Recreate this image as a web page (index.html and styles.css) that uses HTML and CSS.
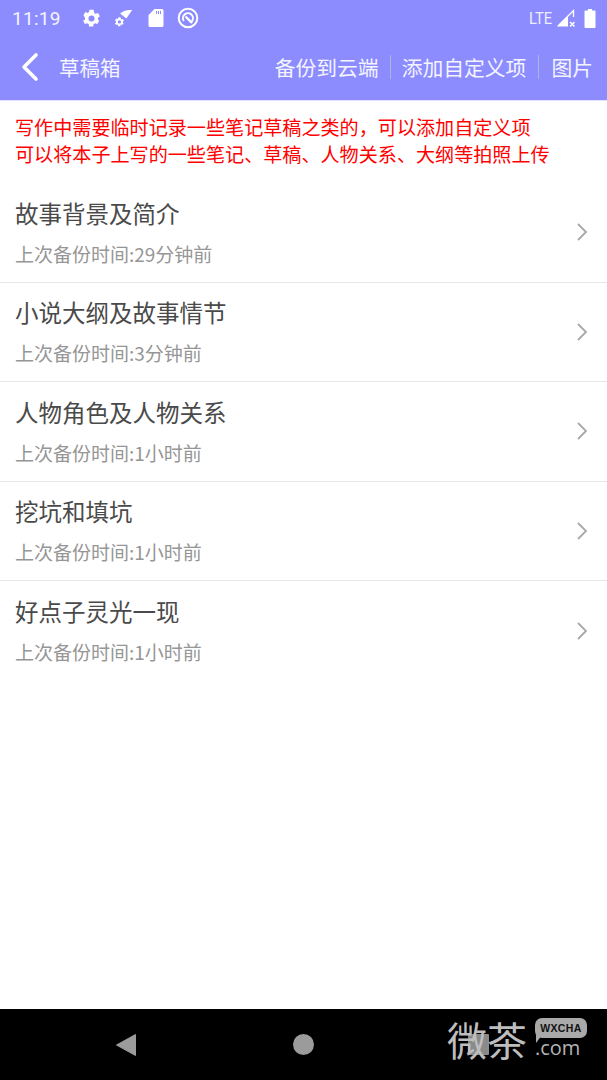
FILE: index.html
```html
<!DOCTYPE html>
<html lang="zh">
<head>
<meta charset="utf-8">
<title>草稿箱</title>
<link rel="stylesheet" href="styles.css">
</head>
<body>
<div class="screen">
  <header class="header">
    <div class="status">
      <span class="time">11:19</span>
      <svg class="ic gear" viewBox="0 0 24 24"><path fill="#fff" fill-rule="evenodd" d="M19.4 13a7.5 7.5 0 0 0 0-2l2.2-1.7-2.1-3.6-2.6 1a7.5 7.5 0 0 0-1.7-1L14.4 2h-4.8l-.4 2.7a7.5 7.5 0 0 0-1.7 1l-2.6-1-2.1 3.6L4.6 11a7.5 7.5 0 0 0 0 2l-2.2 1.7 2.1 3.600 2.6-1a7.5 7.5 0 0 0 1.7 1l.4 2.7h4.8l.4-2.7a7.5 7.5 0 0 0 1.7-1l2.6 1 2.1-3.6zM12 15.5a3.5 3.5 0 1 1 0-7 3.5 3.5 0 0 1 0 7z"/></svg>
      <svg class="ic wifigear" viewBox="0 0 24 24"><path fill="#fff" d="M8.500 6.500Q15 1.500 23 2.500L16 12.500Z"/><g transform="translate(1 10) scale(.56)"><path fill="#fff" fill-rule="evenodd" d="M19.400 13a7.500 7.500 0 0 0 0-2l2.200-1.700-2.100-3.600-2.600 1a7.500 7.500 0 0 0-1.700-1L14.400 2h-4.800l-.4 2.700a7.500 7.500 0 0 0-1.700 1l-2.600-1-2.100 3.600L4.600 11a7.500 7.500 0 0 0 0 2l-2.200 1.700 2.100 3.600 2.600-1a7.500 7.500 0 0 0 1.700 1l.4 2.700h4.800l.4-2.700a7.500 7.500 0 0 0 1.700-1l2.600 1 2.100-3.600zM12 15.500a3.500 3.500 0 1 1 0-7 3.500 3.500 0 0 1 0 7z"/></g></svg>
      <svg class="ic sd" viewBox="0 0 16 20"><path fill="#fff" fill-rule="evenodd" d="M6.500 1H14a1.500 1.500 0 0 1 1.500 1.500v15A1.500 1.500 0 0 1 14 19H2a1.500 1.500 0 0 1-1.500-1.500V7zM8 3v3h1V3zm2 0v3h1V3zm2 0v3h1V3z"/></svg>
      <svg class="ic data" viewBox="0 0 24 24"><circle cx="12" cy="12" r="9.300" fill="none" stroke="#fff" stroke-width="2"/><path d="M7.800 15A5 5 0 1 1 15 16.200" fill="none" stroke="#fff" stroke-width="2"/><path d="M9.500 10.500l6.500 6.500" stroke="#fff" stroke-width="2.400"/></svg>
      <span class="spacer"></span>
      <span class="lte">LTE</span>
      <svg class="ic signal" viewBox="0 0 20 20"><path fill="none" stroke="#fff" stroke-width="1.300" d="M2 18 17.500 2.500V9"/><path fill="#fff" d="M1 18.500 12 7.500v11z"/><path stroke="#fff" stroke-width="1.500" d="m14 14 4.500 4.500m0-4.500-4.500 4.500"/></svg>
      <svg class="ic battery" viewBox="0 0 12 19"><path fill="#fff" d="M4 0h4v1.500h2.500a1 1 0 0 1 1 1V18a1 1 0 0 1-1 1h-9a1 1 0 0 1-1-1V2.500a1 1 0 0 1 1-1H4z"/></svg>
    </div>
    <nav class="toolbar">
      <svg class="back" viewBox="0 0 20 30"><path d="M16 3 4 15l12 12" fill="none" stroke="#fff" stroke-width="3.600" stroke-linecap="round" stroke-linejoin="round"/></svg>
      <h1 class="title">草稿箱</h1>
      <span class="spacer"></span>
      <a class="action">备份到云端</a>
      <i class="sep"></i>
      <a class="action">添加自定义项</a>
      <i class="sep sep-wide"></i>
      <a class="action">图片</a>
    </nav>
  </header>

  <main class="content">
    <p class="notice">写作中需要临时记录一些笔记草稿之类的，可以添加自定义项<br>可以将本子上写的一些笔记、草稿、人物关系、大纲等拍照上传</p>
    <ul class="list">
      <li class="row">
        <div class="row-text"><div class="row-title">故事背景及简介</div><div class="row-sub">上次备份时间:29分钟前</div></div>
        <svg class="chev" viewBox="0 0 12 20"><path d="M2 2l8 8-8 8" fill="none" stroke="#a8a8a8" stroke-width="1.800"/></svg>
      </li>
      <li class="row">
        <div class="row-text"><div class="row-title">小说大纲及故事情节</div><div class="row-sub">上次备份时间:3分钟前</div></div>
        <svg class="chev" viewBox="0 0 12 20"><path d="M2 2l8 8-8 8" fill="none" stroke="#a8a8a8" stroke-width="1.800"/></svg>
      </li>
      <li class="row">
        <div class="row-text"><div class="row-title">人物角色及人物关系</div><div class="row-sub">上次备份时间:1小时前</div></div>
        <svg class="chev" viewBox="0 0 12 20"><path d="M2 2l8 8-8 8" fill="none" stroke="#a8a8a8" stroke-width="1.800"/></svg>
      </li>
      <li class="row">
        <div class="row-text"><div class="row-title">挖坑和填坑</div><div class="row-sub">上次备份时间:1小时前</div></div>
        <svg class="chev" viewBox="0 0 12 20"><path d="M2 2l8 8-8 8" fill="none" stroke="#a8a8a8" stroke-width="1.800"/></svg>
      </li>
      <li class="row">
        <div class="row-text"><div class="row-title">好点子灵光一现</div><div class="row-sub">上次备份时间:1小时前</div></div>
        <svg class="chev" viewBox="0 0 12 20"><path d="M2 2l8 8-8 8" fill="none" stroke="#a8a8a8" stroke-width="1.800"/></svg>
      </li>
    </ul>
  </main>

  <footer class="navbar">
    <svg class="nav-back" viewBox="0 0 22 24"><path d="M20.500 1.500v21L1.500 12z" fill="#9b9b9b" stroke="#9b9b9b" stroke-width="1" stroke-linejoin="round"/></svg>
    <span class="nav-home"></span>
    <span class="nav-recent"></span>
    <div class="mark">
      <span class="mark-cn">微茶</span>
      <div class="mark-side">
        <span class="mark-badge">WXCHA</span>
        <span class="mark-com">.com</span>
      </div>
    </div>
  </footer>
</div>
</body>
</html>
```
FILE: styles.css
```css
* { box-sizing: border-box; }
html, body { margin: 0; padding: 0; }
body {
  background: #fff;
  font-family: "Noto Sans CJK SC", "Noto Sans", sans-serif;
}
.screen {
  width: 607px;
  height: 1080px;
  display: flex;
  flex-direction: column;
  overflow: hidden;
}
.header {
  height: 101px;
  flex: none;
  background: #8c8cff;
  border-bottom: 1px solid #e2e2ff;
  color: #fff;
}
.status {
  height: 36px;
  display: flex;
  align-items: center;
  padding: 0 11px 0 12px;
}
.time {
  font-family: Roboto, sans-serif;
  font-size: 19px;
  letter-spacing: .3px;
  width: 69px;
  color: #f4f4ff;
}
.ic { display: block; flex: none; }
.gear { width: 21px; height: 21px; }
.wifigear { width: 20px; height: 20px; margin-left: 11px; }
.sd { width: 16px; height: 20px; margin-left: 15px; }
.data { width: 24px; height: 24px; margin-left: 12px; }
.spacer { flex: 1; }
.lte {
  font-family: Roboto, sans-serif;
  font-size: 16px;
  color: #eeeeff;
  transform: scaleX(.92);
  transform-origin: right center;
  margin-right: 1px;
}
.signal { width: 20px; height: 20px; margin-left: 3px; }
.battery { width: 12px; height: 19px; margin-left: 8px; }
.toolbar {
  height: 64px;
  display: flex;
  align-items: center;
  padding: 0 14px 2px 20px;
}
.back { width: 20px; height: 30px; flex: none; }
.title {
  margin: 0 0 0 19px;
  font-size: 20.500px;
  font-weight: 400;
  line-height: 30px;
  color: #f4f4ff;
}
.action { font-size: 20.800px; line-height: 30px; color: #f4f4ff; }
.sep {
  width: 1px;
  height: 24px;
  margin: 0 11px;
  background: #b4b4d8;
}
.sep-wide { margin: 0 12px; }
.content { flex: 1; }
.notice {
  margin: 0;
  padding: 13px 15px 0;
  height: 82px;
  font-size: 19.100px;
  line-height: 27px;
  color: #ff0000;
  white-space: nowrap;
}
.list { list-style: none; margin: 0; padding: 0; }
.row {
  height: 99.500px;
  display: flex;
  align-items: center;
  padding: 0 19px 0 15px;
  border-bottom: 1px solid #e6e6e6;
}
.row:last-child { border-bottom: 0; }
.row-text { flex: 1; padding-bottom: 1px; }
.row-title {
  font-size: 23.500px;
  line-height: 32px;
  color: #4a4a4a;
}
.row-sub {
  margin-top: 12px;
  font-size: 19px;
  line-height: 26px;
  color: #969696;
}
.chev { width: 12px; height: 20px; flex: none; }
.navbar {
  position: relative;
  height: 71px;
  flex: none;
  background: #000;
  display: flex;
  align-items: center;
}
.nav-back { position: absolute; left: 115px; top: 24px; width: 22px; height: 24px; }
.nav-home {
  position: absolute;
  left: 293px;
  top: 25px;
  width: 21px;
  height: 21px;
  border-radius: 50%;
  background: #9b9b9b;
}
.nav-recent {
  position: absolute;
  left: 468px;
  top: 25px;
  width: 21px;
  height: 21px;
  background: #8a8a8a;
  border-radius: 1px;
}
.mark {
  position: absolute;
  left: 447px;
  top: 5px;
  display: flex;
  gap: 8px;
  color: #bdbdbd;
}
.mark-cn { font-size: 40px; line-height: 50px; white-space: nowrap; }
.mark-side { display: flex; flex-direction: column; align-items: flex-start; width: 52px; }
.mark-badge {
  position: relative;
  margin-top: 4px;
  width: 52px;
  height: 20px;
  border-radius: 7px;
  background: #a9a9a9;
  color: #111;
  font-family: "Liberation Sans", sans-serif;
  font-size: 10.500px;
  font-weight: 700;
  letter-spacing: .4px;
  line-height: 20px;
  text-align: center;
}
.mark-badge::after {
  content: "";
  position: absolute;
  left: 1px;
  top: 17px;
  border-top: 8px solid #a9a9a9;
  border-right: 6px solid transparent;
}
.mark-com {
  font-family: "Open Sans", sans-serif;
  font-size: 20px;
  line-height: 20px;
  color: #b4b4b4;
}
```
